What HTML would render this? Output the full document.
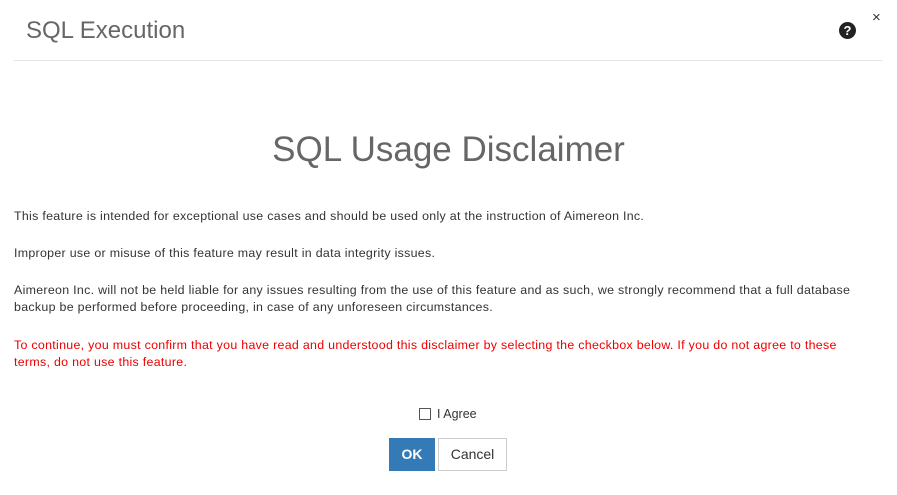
<!DOCTYPE html>
<html><head><style>
body{margin:0;width:897px;height:495px;background:#fff;font-family:"Liberation Sans",sans-serif;color:#333;position:relative;overflow:hidden}
.a{position:absolute}
p{position:absolute;left:14px;margin:0;font-size:12.4px;letter-spacing:0.3px;line-height:16.5px;color:#333;width:845px}
</style></head><body>
<div class="a" style="left:26px;top:17px;font-size:24px;color:#666">SQL Execution</div>
<div class="a" style="left:839px;top:22px;width:17px;height:17px;border-radius:50%;background:#222;color:#fff;font-size:13px;font-weight:bold;text-align:center;line-height:17px">?</div>
<div class="a" style="left:872px;top:9px;font-size:15px;color:#333">×</div>
<div class="a" style="left:14px;top:60px;width:868px;height:1px;background:#e5e5e5"></div>
<div class="a" style="left:0;width:897px;top:130px;text-align:center;font-size:35px;color:#666">SQL Usage Disclaimer</div>
<p style="top:208px">This feature is intended for exceptional use cases and should be used only at the instruction of Aimereon Inc.</p>
<p style="top:245px">Improper use or misuse of this feature may result in data integrity issues.</p>
<p style="top:282px">Aimereon Inc. will not be held liable for any issues resulting from the use of this feature and as such, we strongly recommend that a full database backup be performed before proceeding, in case of any unforeseen circumstances.</p>
<p style="top:337px;color:#e00;width:835px">To continue, you must confirm that you have read and understood this disclaimer by selecting the checkbox below. If you do not agree to these terms, do not use this feature.</p>
<div class="a" style="left:419px;top:408px;width:10px;height:10px;border:1px solid #555"></div>
<div class="a" style="left:437px;top:407px;font-size:12.5px">I Agree</div>
<div class="a" style="left:389px;top:438px;width:46px;height:33px;background:#337ab7;color:#fff;font-size:14px;font-weight:bold;text-align:center;line-height:33px">OK</div>
<div class="a" style="left:438px;top:438px;width:67px;height:31px;border:1px solid #ccc;font-size:14px;text-align:center;line-height:31px">Cancel</div>
</body></html>
